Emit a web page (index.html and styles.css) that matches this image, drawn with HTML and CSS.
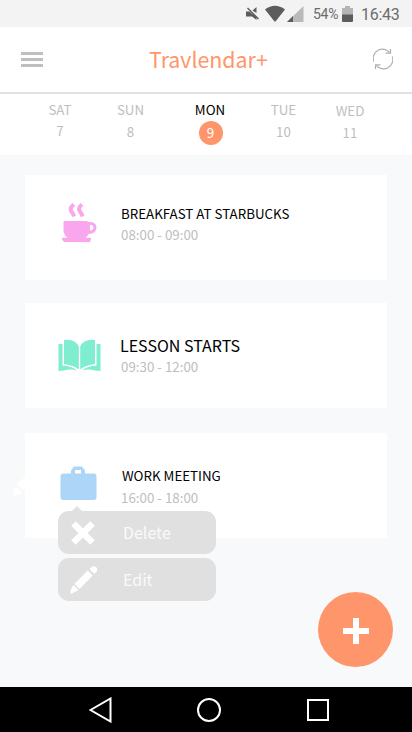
FILE: index.html
```html
<!DOCTYPE html>
<html lang="en">
<head>
<meta charset="utf-8">
<title>Travlendar+</title>
<link rel="stylesheet" href="styles.css">
</head>
<body>
<div class="screen">
  <div class="status">
    <svg class="status-icons" width="60" height="20" viewBox="0 0 60 20">
      <g fill="#5c5c5c">
        <path d="M0 8.500h3.500l1.800 1.800L10.500 13.500v3.500L6 13.500H0z"/>
        <path d="M10.500 4v6L6.500 7.500z"/>
        <path d="M1.500 5L12.500 16" stroke="#5c5c5c" stroke-width="1.500"/>
        <path d="M19 6.500Q29 -1 39 6.500L29.500 18.500h-1z"/>
      </g>
      <path d="M57.500 3v16H41z" fill="#b9b9b9"/>
      <path d="M47 13v6h-6z" fill="#5c5c5c"/>
    </svg>
    <span class="percent">54%</span>
    <svg class="battery" width="11" height="17" viewBox="0 0 11 17">
      <path d="M0 2h3V0h5v2h3v7H0z" fill="#b5b5b5"/>
      <path d="M0 8.500h11V15q0 1-1 1H1q-1 0-1-1z" fill="#5c5c5c"/>
    </svg>
    <span class="clock">16:43</span>
  </div>

  <header class="header">
    <div class="burger"><i></i><i></i><i></i></div>
    <h1 class="brand">Travlendar+</h1>
    <svg class="sync" width="20" height="22" viewBox="0 0 20 22" fill="none" stroke="#b0b0b0" stroke-width="1.200">
      <path d="M.700 13.500A9.300 9.300 0 0 1 16.800 4.700"/>
      <path d="M17.500 1V5.200H12.500"/>
      <path d="M19.300 8.500A9.300 9.300 0 0 1 3.200 17.300"/>
      <path d="M2.500 21V16.800H7.500"/>
    </svg>
  </header>

  <nav class="days">
    <div class="day up"><span>SAT</span><span class="num">7</span></div>
    <div class="day"><span>SUN</span><span class="num">8</span></div>
    <div class="day active"><span>MON</span><span class="num">9</span></div>
    <div class="day"><span>TUE</span><span class="num">10</span></div>
    <div class="day down"><span>WED</span><span class="num">11</span></div>
  </nav>

  <main class="events">
    <article class="card breakfast">
      <svg class="event-icon" width="36" height="40" viewBox="0 0 36 40">
        <path fill="#f9a6ee" fill-rule="evenodd" d="M1.500 18.800Q1.500 18 2.500 18H25l1 1q8.500-.5 8.500 5.500t-8 6.500q-1 2.500-3 3.800h5.500v1.400L28 39H2L0 36.200v-1.400h5.500Q1.500 32 1.500 27zM28 21.800v5.800q3.400-.5 3.400-3T28 21.800z"/>
        <path d="M12 1.500q-5 3.500-2.500 7 2 2.500 2.500 5M20 1.500q-4.500 3.500-2 7 2 2.500 2.500 5" fill="none" stroke="#f9a6ee" stroke-width="4"/>
      </svg>
      <div class="info"><h2>BREAKFAST AT STARBUCKS</h2><p>08:00 - 09:00</p></div>
    </article>
    <article class="card lesson">
      <svg class="event-icon" width="43" height="33" viewBox="0 0 43 33">
        <g fill="#7eedd0">
          <path d="M6 1Q17 -.5 20.800 7.500V30.500Q17 26.500 6 25z"/>
          <path d="M37 1Q26 -.5 22.200 7.500V30.500Q26 26.500 37 25z"/>
          <path d="M.500 5H4.500V26.500Q14 27 19 31.500Q13 29.500 6 31.500L.500 32z"/>
          <path d="M42.500 5H38.500V26.500Q29 27 24 31.500Q30 29.500 37 31.500L42.500 32z"/>
        </g>
      </svg>
      <div class="info"><h2>LESSON STARTS</h2><p>09:30 - 12:00</p></div>
    </article>
    <article class="card work">
      <svg class="event-icon" width="37" height="35" viewBox="0 0 37 35">
        <path fill="#acd5f7" fill-rule="evenodd" d="M3.500 7.500H11V4.500L14 .5h8l3 4v3h8.500q3 0 3 3V31q0 3-3 3h-30q-3 0-3-3V10.500q0-3 3-3zM15 7.500h6V4h-6z"/>
      </svg>
      <div class="info"><h2>WORK MEETING</h2><p>16:00 - 18:00</p></div>
      <svg class="pencil-tip" width="13" height="20" viewBox="0 0 13 20" fill="#fff">
        <path d="M13 0v11.500L11.500 13 4.500 7.500zM3 9.500l7 5.500-2.500 2.500L1.500 19 .5 18z"/>
      </svg>
      <div class="menu">
        <button class="item first">
          <svg width="28" height="28" viewBox="0 0 28 28"><path d="M4.500 4.500L23.500 23.500M23.500 4.500L4.500 23.500" stroke="#fff" stroke-width="6.500"/></svg>
          <span>Delete</span>
        </button>
        <button class="item">
          <svg width="28" height="28" viewBox="0 0 28 28" fill="#fff"><path d="M20.500 3L23 .5h3.500l1.500 1.500V5L25.500 8zM18.700 4.500l5 5L10.500 23l-5-5zM4.500 19l5 5-2.500 1.200-4 2.300H1.500V24z"/></svg>
          <span>Edit</span>
        </button>
      </div>
    </article>
  </main>

  <button class="fab" aria-label="Add"><svg width="26" height="26" viewBox="0 0 26 26"><path d="M13 0v26M0 13h26" stroke="#fff" stroke-width="6"/></svg></button>

  <footer class="navbar">
    <svg class="back" width="23" height="26" viewBox="0 0 23 26"><path d="M1.500 13L21.500 1.500V24.500z"/></svg>
    <svg class="home" width="24" height="24" viewBox="0 0 24 24"><circle cx="12" cy="12" r="11"/></svg>
    <svg class="recent" width="22" height="22" viewBox="0 0 22 22"><path d="M1 1h20v20H1z"/></svg>
  </footer>
</div>
</body>
</html>
```
FILE: styles.css
```css
* { box-sizing: border-box; }
body { margin: 0; }
h1, h2, p { margin: 0; font-weight: 400; }
button { border: 0; padding: 0; font: inherit; }
svg { display: block; flex: none; }

.screen {
  position: relative;
  width: 412px;
  height: 732px;
  overflow: hidden;
  display: flex;
  flex-direction: column;
  background: #f7f9fb;
  font-family: "Noto Sans CJK SC", "Noto Sans", sans-serif;
  font-size: 13.33px;
  line-height: 20px;
  color: #bebebe;
}

.status {
  height: 27px;
  padding: 3px 0 0 246px;
  display: flex;
  align-items: flex-start;
  background: #f3f3f3;
  color: #6c6c6c;
  font-family: Roboto, sans-serif;
}
.percent { margin-left: 7px; width: 29px; line-height: 23px; font-size: 14px; letter-spacing: -0.3px; }
.battery { margin-top: 3px; }
.clock { margin-left: 8px; line-height: 24px; font-size: 16px; letter-spacing: -0.3px; }

.header {
  height: 67px;
  padding: 0 19px 0 21px;
  display: flex;
  align-items: center;
  background: #fff;
  border-bottom: 2px solid #e1e1e1;
}
.burger { width: 22px; display: flex; flex-direction: column; gap: 3px; }
.burger i { height: 3px; background: #bfbfbf; }
.brand { margin: -2px 0 0 106px; width: 120px; line-height: 32px; font-size: 21.33px; color: #ff966b; white-space: nowrap; }
.sync { margin-left: auto; margin-top: -1px; }

.days {
  height: 61px;
  padding: 6px 0 0 30px;
  display: grid;
  grid-template-columns: 60px 81px 78px 69px 64px;
  background: #fff;
}
.day { display: flex; flex-direction: column; align-items: center; gap: 2px; line-height: 20px; }
.day.up { gap: 1px; }
.day.down { padding-top: 1px; }
.active { color: #000; gap: 1px; }
.active .num {
  margin-left: 1px;
  width: 24px;
  height: 24px;
  line-height: 23px;
  text-align: center;
  border-radius: 50%;
  background: #ff966b;
  color: #fff;
}

.events { padding: 20px 25px 0; display: flex; flex-direction: column; }
.card { position: relative; height: 105px; display: flex; align-items: flex-start; background: #fff; }
.info { white-space: nowrap; }
.info h2 { font-size: 13.33px; line-height: 20px; color: #000; }
.info p { margin-top: 1px; }
.breakfast .event-icon { margin: 28px 0 0 37px; }
.breakfast .info { margin: 29px 0 0 23px; }
.lesson { margin-top: 23px; }
.lesson .event-icon { margin: 36px 0 0 33px; }
.lesson .info { margin: 32px 0 0 20px; }
.lesson h2 { margin-left: -1px; font-size: 16px; }
.lesson .info p { margin-top: 2px; }
.work { margin-top: 25px; }
.work .event-icon { margin: 33px 0 0 35px; }
.work .info { margin: 33px 0 0 24px; }
.work .info h2 { margin-left: 1px; }
.work .info p { margin-top: 2px; }
.pencil-tip { position: absolute; left: -13px; top: 44px; }

.menu { position: absolute; left: 33px; top: 78px; width: 158px; display: flex; flex-direction: column; gap: 4px; }
.item {
  position: relative;
  height: 43px;
  padding-left: 11px;
  display: flex;
  align-items: center;
  border-radius: 11px;
  background: #e0e0e0;
  color: #fafafa;
  font-size: 16px;
}
.item span { margin: -2px 0 0 26px; }
.first::before {
  content: "";
  position: absolute;
  left: 14px;
  top: -5px;
  border: 5px solid transparent;
  border-top: 0;
  border-bottom-color: #e0e0e0;
}

.fab {
  position: absolute;
  left: 318px;
  top: 592px;
  width: 75px;
  height: 75px;
  border-radius: 50%;
  display: grid;
  place-items: center;
  background: #ff966b;
}
.fab svg { margin-top: 3px; margin-left: 1px; }

.navbar { height: 45px; margin-top: auto; padding: 0 83px 0 89px; display: flex; align-items: center; background: #000; }
.navbar svg { fill: none; stroke: #fff; stroke-width: 2; }
.home { margin-left: 85px; margin-top: 1px; }
.recent { margin-left: auto; }
```
